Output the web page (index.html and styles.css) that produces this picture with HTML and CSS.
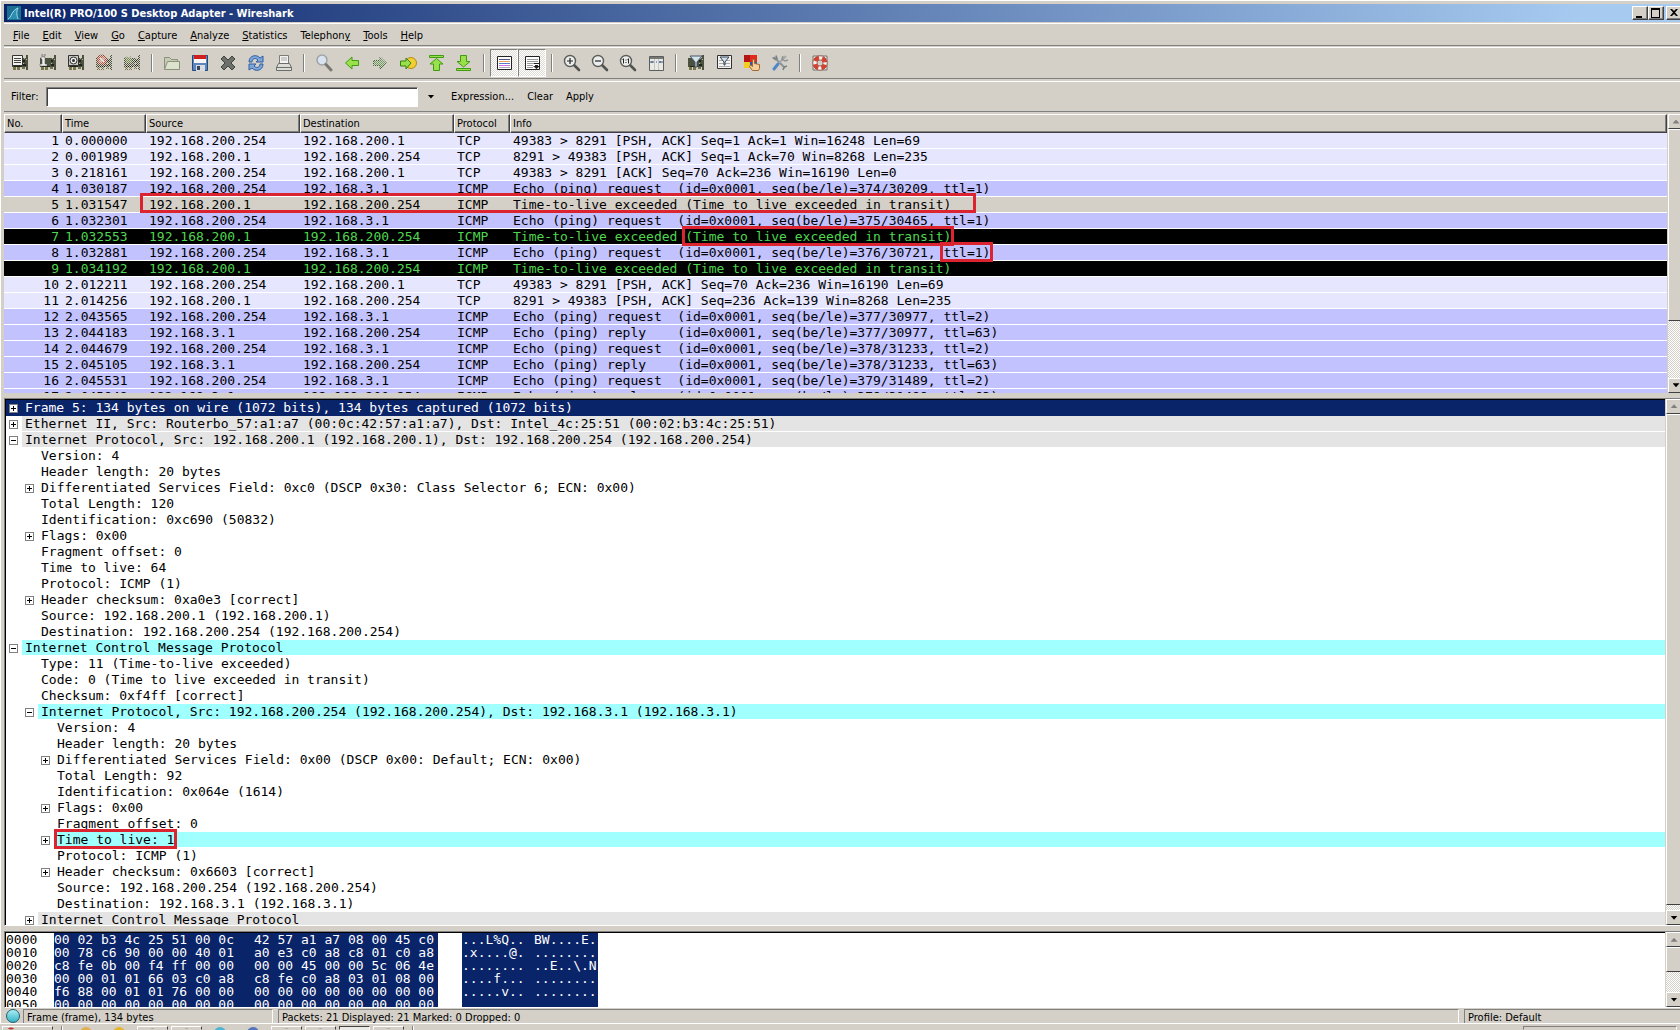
FILE: index.html
```html
<!DOCTYPE html>
<html lang="en">
<head>
<meta charset="utf-8">
<title>Intel(R) PRO/100 S Desktop Adapter - Wireshark</title>
<link rel="stylesheet" href="styles.css">
</head>
<body>
<svg class="defs" aria-hidden="true">
  <defs>
    <symbol id="card" viewBox="0 0 18 18">
      <path d="M15 1h2v15h-2zM1 4h14v9H1z" fill="#4c5240"/>
      <path d="M2 13h3v3H2zm4 0h3v3H6zm5 0h3v2h-3z" fill="#77754c"/>
      <path d="M12 6h2v2h-2zm0 4h3v2h-3zM3 12h8v1H3z" fill="#20241c"/>
      <path d="M13 4h1v1h-1zM12 9h1v1h-1zM15 5h1v1h-1z" fill="#b5b894"/>
    </symbol>
    <symbol id="lens" viewBox="0 0 18 18">
      <circle cx="7" cy="7" r="5.5" fill="#eceeed" stroke="#5a5d5a" stroke-width="1.4"/>
      <path d="M11.5 11.5l4.500 4.500" stroke="#50534f" stroke-width="2.6" stroke-linecap="round"/>
    </symbol>
    <pattern id="dots" width="2" height="2" patternUnits="userSpaceOnUse">
      <path d="M0 0h1v1H0zM1 1h1v1H1z" fill="#d4d0c8"/>
    </pattern>
  </defs>
</svg>
<div class="window">
  <header class="titlebar">
    <svg class="logo" viewBox="0 0 14 14"><path d="M0 0h14v14H0z" fill="#1d6f91"/><path d="M1 13C4 12 5 4 11 2c-2 4-1 8 0 11" fill="#2d8eaf" stroke="#9edcf0"/></svg>
    <h1>Intel(R) PRO/100 S Desktop Adapter - Wireshark</h1>
    <div class="winbtns">
      <button aria-label="Minimize"><svg viewBox="0 0 12 10"><path d="M2 8h6v2H2z"/></svg></button>
      <button aria-label="Maximize"><svg viewBox="0 0 12 10"><path d="M1 0h9v10H1zM2 2v7h7V2z" fill-rule="evenodd"/></svg></button>
      <button class="close" aria-label="Close"><svg viewBox="0 0 12 10"><path d="M2 1h2l2 2 2-2h2L7 4.500 10 8H8L6 6 4 8H2l3-3.500z"/></svg></button>
    </div>
  </header>
  <nav class="menubar">
    <button><u>F</u>ile</button><button><u>E</u>dit</button><button><u>V</u>iew</button><button><u>G</u>o</button><button><u>C</u>apture</button><button><u>A</u>nalyze</button><button><u>S</u>tatistics</button><button>Telephon<u>y</u></button><button><u>T</u>ools</button><button><u>H</u>elp</button>
  </nav>
  <div class="toolbar" role="toolbar">
    <button aria-label="List interfaces"><svg viewBox="0 0 18 18"><use href="#card"/><path d="M1.500 1.500h10v10h-10z" fill="#f2f2ee" stroke="#333"/><path d="M3 4.500h7M3 6.500h7M3 8.500h7" stroke="#444"/></svg></button>
    <button aria-label="Capture options"><svg viewBox="0 0 18 18"><use href="#card"/><path d="M2 3h4v7h2v2H1v-2h2V5H2z" fill="#eee" stroke="#555" stroke-width=".5"/><path d="M3 0h3v2H3z" fill="#eee" stroke="#333" stroke-width=".5"/></svg></button>
    <button aria-label="Start capture"><svg viewBox="0 0 18 18"><use href="#card"/><path d="M1.500 1.500h10v10h-10z" fill="#c9c9c2" stroke="#333"/><circle cx="6.500" cy="6.500" r="3.500" fill="#eee" stroke="#333"/><circle cx="6.500" cy="6.500" r="1.500" fill="#333"/></svg></button>
    <button aria-label="Stop capture" disabled><svg viewBox="0 0 18 18"><use href="#card"/><circle cx="7" cy="6" r="5" fill="#c4503e" stroke="#80382f"/><path d="M5 4l4 4m0-4L5 8" stroke="#eee" stroke-width="1.500"/><path d="M0 0h18v18H0z" fill="url(#dots)"/></svg></button>
    <button aria-label="Restart capture" disabled><svg viewBox="0 0 18 18"><use href="#card"/><path d="M2 2l4 2 2-2 1 7H3z" fill="#6f8a4a"/><path d="M0 0h18v18H0z" fill="url(#dots)"/></svg></button>
    <i class="sep"></i>
    <button aria-label="Open"><svg viewBox="0 0 18 18"><path d="M1.500 15.500v-12h5l2 2h6v3" fill="#c5cbb4" stroke="#8a927a"/><path d="M4.500 7.500h12v8h-15z" fill="#dde2cf" stroke="#8a927a"/></svg></button>
    <button aria-label="Save"><svg viewBox="0 0 18 18"><path d="M1.500 1.500h15v15h-15z" fill="#5c86bd" stroke="#27487a"/><path d="M3 1h12v4H3z" fill="#cf1f1f"/><path d="M3 5h12v4H3z" fill="#f6f6f6"/><path d="M5 11h9v6H5z" fill="#d8dce0"/><path d="M6 12h3v4H6z" fill="#35455e"/></svg></button>
    <button aria-label="Close file"><svg viewBox="0 0 18 18"><path d="M2 5l3-3 4 4 4-4 3 3-4 4 4 4-3 3-4-4-4 4-3-3 4-4z" fill="#6d6f6b" stroke="#41433f"/></svg></button>
    <button aria-label="Reload"><svg viewBox="0 0 18 18"><path d="M2 8C2 1 10 0 13 4l3-2v6h-7l2-2C8 3 5 5 5 8z" fill="#7da7dc" stroke="#315f9f"/><path d="M16 10c0 7-8 8-11 4l-3 2v-6h7l-2 2c3 3 6 1 6-2z" fill="#7da7dc" stroke="#315f9f"/></svg></button>
    <button aria-label="Print"><svg viewBox="0 0 18 18"><path d="M4.500 9.500v-8h9v8" fill="#f3f3f1" stroke="#7b7d79"/><path d="M6 4h6M6 6h6" stroke="#aaa"/><path d="M1.500 13.500l2-4h11l2 4v3h-15z" fill="#dcdcd8" stroke="#6b6d69"/><path d="M1.500 13.500h15" stroke="#6b6d69"/></svg></button>
    <i class="sep"></i>
    <button aria-label="Find"><svg viewBox="0 0 18 18"><circle cx="7" cy="6" r="5" fill="#d7e3ef" stroke="#a0a3a6" stroke-width="1.500"/><path d="M11 10.500l5 5.500" stroke="#7a7974" stroke-width="3" stroke-linecap="round"/></svg></button>
    <button aria-label="Back"><svg viewBox="0 0 18 18"><path d="M2.500 9L9 3v3.500h6.500v5H9V15z" fill="#9ae04a" stroke="#3f9a14"/></svg></button>
    <button aria-label="Forward" disabled><svg viewBox="0 0 18 18"><path d="M15.500 9L9 3v3.500H2.500v5H9V15z" fill="#6fa060" stroke="#3b5f38"/><path d="M0 0h18v18H0z" fill="url(#dots)"/></svg></button>
    <button aria-label="Go to packet"><svg viewBox="0 0 18 18"><circle cx="12" cy="9" r="5.500" fill="#f0cf33" stroke="#b28b12"/><path d="M12 9L7 4v3H1.500v5H7v3z" fill="#9ae04a" stroke="#35800f"/></svg></button>
    <button aria-label="First packet"><svg viewBox="0 0 18 18"><path d="M2.500 1.500h14v2h-14zM9.500 4.500L16 10h-3.500v6.500h-6V10H3z" fill="#9ae04a" stroke="#3f9a14"/></svg></button>
    <button aria-label="Last packet"><svg viewBox="0 0 18 18"><path d="M1.500 14.500h14v2h-14zM8.500 13L15 7.500h-3.500v-6h-6v6H2z" fill="#9ae04a" stroke="#3f9a14"/></svg></button>
    <i class="sep"></i>
    <button class="on" aria-pressed="true" aria-label="Colorize"><svg viewBox="0 0 18 18"><path d="M2.500 2.500h14v13h-14z" fill="#fff" stroke="#222"/><path d="M4 5.500h11" stroke="#557"/><path d="M4 7.500h11" stroke="#e8a25c"/><path d="M4 9.500h11" stroke="#5a79c9"/><path d="M4 11.500h11" stroke="#cf6fe0"/><path d="M4 13.500h11" stroke="#aab"/></svg></button>
    <button class="on" aria-pressed="true" aria-label="Auto scroll"><svg viewBox="0 0 18 18"><path d="M2.500 2.500h14v13h-14z" fill="#fff" stroke="#222"/><path d="M4 5.500h11M4 7.500h11M4 9.500h7M4 11.500h6M4 13.500h6" stroke="#999"/><path d="M11 9h5v1h-5zM12 11h3v1h2l-3.500 3L10 12h2z" fill="#222"/></svg></button>
    <i class="sep"></i>
    <button aria-label="Zoom in"><svg viewBox="0 0 18 18"><use href="#lens"/><path d="M4 7h6M7 4v6" stroke="#222" stroke-width="1.200"/></svg></button>
    <button aria-label="Zoom out"><svg viewBox="0 0 18 18"><use href="#lens"/><path d="M4 7h6" stroke="#222" stroke-width="1.200"/></svg></button>
    <button aria-label="Normal size"><svg viewBox="0 0 18 18"><use href="#lens"/><path d="M4.500 4.500v5M9.500 4.500v5M7 5.500v1M7 8v1M3.500 5.500h1M8.500 5.500h1" stroke="#222"/></svg></button>
    <button aria-label="Resize columns"><svg viewBox="0 0 18 18"><path d="M2.500 2.500h14v14h-14z" fill="#e9e9e6" stroke="#5b5d59"/><path d="M3 3h13v2H3z" fill="#777"/><path d="M7.500 5v11M11.500 5v11" stroke="#c4c4c0"/><path d="M3 8h4M12 8h4M9 8h1M5 7v2M13 7v2" stroke="#3b5b8d"/></svg></button>
    <i class="sep"></i>
    <button aria-label="Capture filters"><svg viewBox="0 0 18 18"><use href="#card"/><path d="M3 2h12l-5 6v5H8V8z" fill="#d5e3ea" stroke="#456"/></svg></button>
    <button aria-label="Display filters"><svg viewBox="0 0 18 18"><path d="M2.500 1.500h14v13h-14z" fill="#f2f2f0" stroke="#333"/><path d="M4 9.500h11M4 12.500h11M4 6.500h11" stroke="#aaa"/><path d="M5 3h9l-4 5v3H9V8z" fill="#cfe0e8" stroke="#345"/></svg></button>
    <button aria-label="Coloring rules"><svg viewBox="0 0 18 18"><path d="M1 1h6v7H1z" fill="#b51414"/><path d="M7 1h7v7H7z" fill="#e12a1c"/><path d="M1 8h6v6H1z" fill="#f4cd1f"/><path d="M7 8h7v6H7z" fill="#2e55b7"/><path d="M9.500 16.500l-3-4 1-1.500 2 1.500v-7h2v4l5 1v4l-1 2z" fill="#f4cf9b" stroke="#a3682d"/></svg></button>
    <button aria-label="Preferences"><svg viewBox="0 0 18 18"><path d="M3 3l11 11" stroke="#8d9294" stroke-width="2"/><path d="M1.500 3.500l3 2 1.500-1L5 1.500M12 16l1-3 3-1" fill="none" stroke="#7a8286" stroke-width="1.500"/><path d="M15 2L8 9" stroke="#a5a9ab" stroke-width="2"/><path d="M7 10l-4 5" stroke="#4f86c9" stroke-width="3" stroke-linecap="round"/><path d="M12 2l-1 3 3 2 3-1" fill="none" stroke="#8d9294" stroke-width="1.500"/></svg></button>
    <i class="sep"></i>
    <button aria-label="Help"><svg viewBox="0 0 18 18"><path d="M2 2h14v14H2z" fill="#e6e3dd" stroke="#77756f"/><circle cx="9" cy="9" r="5.200" fill="none" stroke="#f4f1ee" stroke-width="4"/><circle cx="9" cy="9" r="5.200" fill="none" stroke="#d9412f" stroke-width="4" stroke-dasharray="4.900 3.268" stroke-dashoffset="-1.600"/><circle cx="9" cy="9" r="7.200" fill="none" stroke="#8b3a30" stroke-width=".6"/><circle cx="9" cy="9" r="3" fill="#d4d0c8" stroke="#8b3a30" stroke-width=".7"/></svg></button>
  </div>
  <form class="filter">
    <label for="filter">Filter:</label>
    <input id="filter" type="text">
    <button type="button" class="drop" aria-label="Filter history"><i class="tri down"></i></button>
    <button type="button" class="expr">Expression...</button>
    <button type="button" class="clear">Clear</button>
    <button type="button">Apply</button>
  </form>

  <section class="pane list">
    <div class="view">
      <table>
        <colgroup><col class="c-no"><col class="c-time"><col class="c-addr"><col class="c-addr"><col class="c-proto"><col></colgroup>
        <thead><tr><th>No.</th><th>Time</th><th>Source</th><th>Destination</th><th>Protocol</th><th>Info</th></tr></thead>
        <tbody>
          <tr class="tcp"><td>1</td><td>0.000000</td><td>192.168.200.254</td><td>192.168.200.1</td><td>TCP</td><td>49383 &gt; 8291 [PSH, ACK] Seq=1 Ack=1 Win=16248 Len=69</td></tr>
          <tr class="tcp"><td>2</td><td>0.001989</td><td>192.168.200.1</td><td>192.168.200.254</td><td>TCP</td><td>8291 &gt; 49383 [PSH, ACK] Seq=1 Ack=70 Win=8268 Len=235</td></tr>
          <tr class="tcp"><td>3</td><td>0.218161</td><td>192.168.200.254</td><td>192.168.200.1</td><td>TCP</td><td>49383 &gt; 8291 [ACK] Seq=70 Ack=236 Win=16190 Len=0</td></tr>
          <tr class="icmp"><td>4</td><td>1.030187</td><td>192.168.200.254</td><td>192.168.3.1</td><td>ICMP</td><td>Echo (ping) request  (id=0x0001, seq(be/le)=374/30209, ttl=1)</td></tr>
          <tr class="sel"><td>5</td><td>1.031547</td><td class="boxed">192.168.200.1</td><td>192.168.200.254</td><td>ICMP</td><td>Time-to-live exceeded (Time to live exceeded in transit)</td></tr>
          <tr class="icmp"><td>6</td><td>1.032301</td><td>192.168.200.254</td><td>192.168.3.1</td><td>ICMP</td><td>Echo (ping) request  (id=0x0001, seq(be/le)=375/30465, ttl=1)</td></tr>
          <tr class="err"><td>7</td><td>1.032553</td><td>192.168.200.1</td><td>192.168.200.254</td><td>ICMP</td><td>Time-to-live exceeded <span class="mark">(Time to live exceeded in transit)</span></td></tr>
          <tr class="icmp"><td>8</td><td>1.032881</td><td>192.168.200.254</td><td>192.168.3.1</td><td>ICMP</td><td>Echo (ping) request  (id=0x0001, seq(be/le)=376/30721, <span class="mark">ttl=1)</span></td></tr>
          <tr class="err"><td>9</td><td>1.034192</td><td>192.168.200.1</td><td>192.168.200.254</td><td>ICMP</td><td>Time-to-live exceeded (Time to live exceeded in transit)</td></tr>
          <tr class="tcp"><td>10</td><td>2.012211</td><td>192.168.200.254</td><td>192.168.200.1</td><td>TCP</td><td>49383 &gt; 8291 [PSH, ACK] Seq=70 Ack=236 Win=16190 Len=69</td></tr>
          <tr class="tcp"><td>11</td><td>2.014256</td><td>192.168.200.1</td><td>192.168.200.254</td><td>TCP</td><td>8291 &gt; 49383 [PSH, ACK] Seq=236 Ack=139 Win=8268 Len=235</td></tr>
          <tr class="icmp"><td>12</td><td>2.043565</td><td>192.168.200.254</td><td>192.168.3.1</td><td>ICMP</td><td>Echo (ping) request  (id=0x0001, seq(be/le)=377/30977, ttl=2)</td></tr>
          <tr class="icmp"><td>13</td><td>2.044183</td><td>192.168.3.1</td><td>192.168.200.254</td><td>ICMP</td><td>Echo (ping) reply    (id=0x0001, seq(be/le)=377/30977, ttl=63)</td></tr>
          <tr class="icmp"><td>14</td><td>2.044679</td><td>192.168.200.254</td><td>192.168.3.1</td><td>ICMP</td><td>Echo (ping) request  (id=0x0001, seq(be/le)=378/31233, ttl=2)</td></tr>
          <tr class="icmp"><td>15</td><td>2.045105</td><td>192.168.3.1</td><td>192.168.200.254</td><td>ICMP</td><td>Echo (ping) reply    (id=0x0001, seq(be/le)=378/31233, ttl=63)</td></tr>
          <tr class="icmp"><td>16</td><td>2.045531</td><td>192.168.200.254</td><td>192.168.3.1</td><td>ICMP</td><td>Echo (ping) request  (id=0x0001, seq(be/le)=379/31489, ttl=2)</td></tr>
          <tr class="icmp"><td>17</td><td>2.045949</td><td>192.168.3.1</td><td>192.168.200.254</td><td>ICMP</td><td>Echo (ping) reply    (id=0x0001, seq(be/le)=379/31489, ttl=63)</td></tr>
        </tbody>
      </table>
    </div>
    <div class="scroll"><button aria-label="Up"><i class="tri up"></i></button><div class="thumb"></div><div class="track"></div><button aria-label="Down"><i class="tri down"></i></button></div>
  </section>

  <section class="pane tree sunken">
    <div class="view">
      <div class="row sel"><button aria-label="Expand"></button><span>Frame 5: 134 bytes on wire (1072 bits), 134 bytes captured (1072 bits)</span></div>
      <div class="row head"><button aria-label="Expand"></button><span>Ethernet II, Src: Routerbo_57:a1:a7 (00:0c:42:57:a1:a7), Dst: Intel_4c:25:51 (00:02:b3:4c:25:51)</span></div>
      <div class="row head"><button aria-label="Collapse"></button><span>Internet Protocol, Src: 192.168.200.1 (192.168.200.1), Dst: 192.168.200.254 (192.168.200.254)</span></div>
      <div class="group">
        <div class="row"><span>Version: 4</span></div>
        <div class="row"><span>Header length: 20 bytes</span></div>
        <div class="row"><button aria-label="Expand"></button><span>Differentiated Services Field: 0xc0 (DSCP 0x30: Class Selector 6; ECN: 0x00)</span></div>
        <div class="row"><span>Total Length: 120</span></div>
        <div class="row"><span>Identification: 0xc690 (50832)</span></div>
        <div class="row"><button aria-label="Expand"></button><span>Flags: 0x00</span></div>
        <div class="row"><span>Fragment offset: 0</span></div>
        <div class="row"><span>Time to live: 64</span></div>
        <div class="row"><span>Protocol: ICMP (1)</span></div>
        <div class="row"><button aria-label="Expand"></button><span>Header checksum: 0xa0e3 [correct]</span></div>
        <div class="row"><span>Source: 192.168.200.1 (192.168.200.1)</span></div>
        <div class="row"><span>Destination: 192.168.200.254 (192.168.200.254)</span></div>
      </div>
      <div class="row hit"><button aria-label="Collapse"></button><span>Internet Control Message Protocol</span></div>
      <div class="group">
        <div class="row"><span>Type: 11 (Time-to-live exceeded)</span></div>
        <div class="row"><span>Code: 0 (Time to live exceeded in transit)</span></div>
        <div class="row"><span>Checksum: 0xf4ff [correct]</span></div>
        <div class="row hit"><button aria-label="Collapse"></button><span>Internet Protocol, Src: 192.168.200.254 (192.168.200.254), Dst: 192.168.3.1 (192.168.3.1)</span></div>
        <div class="group">
          <div class="row"><span>Version: 4</span></div>
          <div class="row"><span>Header length: 20 bytes</span></div>
          <div class="row"><button aria-label="Expand"></button><span>Differentiated Services Field: 0x00 (DSCP 0x00: Default; ECN: 0x00)</span></div>
          <div class="row"><span>Total Length: 92</span></div>
          <div class="row"><span>Identification: 0x064e (1614)</span></div>
          <div class="row"><button aria-label="Expand"></button><span>Flags: 0x00</span></div>
          <div class="row"><span>Fragment offset: 0</span></div>
          <div class="row hit"><button aria-label="Expand"></button><span><b class="mark">Time to live: 1</b></span></div>
          <div class="row"><span>Protocol: ICMP (1)</span></div>
          <div class="row"><button aria-label="Expand"></button><span>Header checksum: 0x6603 [correct]</span></div>
          <div class="row"><span>Source: 192.168.200.254 (192.168.200.254)</span></div>
          <div class="row"><span>Destination: 192.168.3.1 (192.168.3.1)</span></div>
        </div>
        <div class="row head"><button aria-label="Expand"></button><span>Internet Control Message Protocol</span></div>
      </div>
    </div>
    <div class="scroll"><button aria-label="Up"><i class="tri up"></i></button><div class="thumb"></div><div class="track"></div><button aria-label="Down"><i class="tri down"></i></button></div>
  </section>

  <section class="pane hex sunken">
    <div class="view">
      <div class="line"><span>0000</span><span>00 02 b3 4c 25 51 00 0c</span><span>42 57 a1 a7 08 00 45 c0</span><span>...L%Q..</span><span>BW....E.</span></div>
      <div class="line"><span>0010</span><span>00 78 c6 90 00 00 40 01</span><span>a0 e3 c0 a8 c8 01 c0 a8</span><span>.x....@.</span><span>........</span></div>
      <div class="line"><span>0020</span><span>c8 fe 0b 00 f4 ff 00 00</span><span>00 00 45 00 00 5c 06 4e</span><span>........</span><span>..E..\.N</span></div>
      <div class="line"><span>0030</span><span>00 00 01 01 66 03 c0 a8</span><span>c8 fe c0 a8 03 01 08 00</span><span>....f...</span><span>........</span></div>
      <div class="line"><span>0040</span><span>f6 88 00 01 01 76 00 00</span><span>00 00 00 00 00 00 00 00</span><span>.....v..</span><span>........</span></div>
      <div class="line"><span>0050</span><span>00 00 00 00 00 00 00 00</span><span>00 00 00 00 00 00 00 00</span><span>........</span><span>........</span></div>
    </div>
    <div class="scroll"><button aria-label="Up"><i class="tri up"></i></button><div class="thumb"></div><div class="track"></div><button aria-label="Down"><i class="tri down"></i></button></div>
  </section>

  <footer class="status">
    <i class="orb"></i>
    <span class="s-frame">Frame (frame), 134 bytes</span>
    <span class="s-packets">Packets: 21 Displayed: 21 Marked: 0 Dropped: 0</span>
    <span class="s-profile">Profile: Default</span>
  </footer>
</div>
<div class="taskbar">
  <i class="task start"></i><i class="tsep"></i><i class="dot gold"></i><i class="dot amber"></i>
  <i class="task"></i><i class="task"></i><i class="dot cyan"></i><i class="dot blue"></i>
  <i class="task"></i><i class="task"></i><i class="task down"></i><i class="task"></i><i class="tsep"></i>
  <i class="tray"></i>
</div>
</body>
</html>
```
FILE: styles.css
```css
*, *::after { box-sizing: border-box; }

:root {
  --face: #d4d0c8;
  --shade: #808080;
  --navy: #0a246a;
  --red: #dc2430;
  --ui: 11px "DejaVu Sans Condensed", "DejaVu Sans", sans-serif;
  --mono: 13px "DejaVu Sans Mono", monospace;
}

body {
  margin: 0;
  height: 100vh;
  overflow: hidden;
  display: flex;
  flex-direction: column;
  background: var(--face);
  font: var(--ui);
  color: #000;
}

button {
  margin: 0;
  padding: 0;
  border: 0;
  background: none;
  font: inherit;
  color: inherit;
}

.defs { position: absolute; width: 0; height: 0; }

/* The frame runs a little past the right edge of the screen. */
.window {
  flex: 1;
  min-height: 0;
  margin-right: -4px;
  padding: 3px 0 0 4px;
  border-top: 1px solid #fff;
  box-shadow: inset 1px 0 #fff;
  display: flex;
  flex-direction: column;
}

/* Title bar */
.titlebar {
  flex: none;
  height: 18px;
  padding: 0 2px 0 3px;
  display: flex;
  align-items: center;
  gap: 3px;
  background: linear-gradient(90deg, #0a246a, #a6caf0 94%);
}
.logo { width: 14px; height: 14px; }
h1 {
  flex: 1;
  margin: 0;
  font: bold 11px "DejaVu Sans Condensed", sans-serif;
  color: #fff;
}
.winbtns { display: flex; }
.winbtns button {
  width: 16px;
  height: 14px;
  padding: 0 1px;
  background: var(--face);
  border: 1px solid;
  border-color: #fff #404040 #404040 #fff;
  box-shadow: inset -1px -1px var(--shade);
}
.winbtns .close { margin-left: 2px; }
.winbtns svg { display: block; width: 12px; height: 10px; }

/* Menus and tools */
.menubar, .toolbar, .filter {
  flex: none;
  display: flex;
  align-items: center;
  border-top: 1px solid #fff;
  border-bottom: 1px solid var(--shade);
}
.menubar { height: 23px; margin-top: 1px; padding: 2px 0 0 2px; }
.menubar button { padding: 0 6px 0 7px; }
.toolbar { height: 32px; margin-top: 1px; padding-left: 2px; }
.toolbar button { width: 28px; height: 28px; }
.toolbar svg { display: block; width: 18px; height: 18px; margin: 0 auto; }
.toolbar .on {
  border: 1px solid;
  border-color: var(--shade) #fff #fff var(--shade);
  background: repeating-conic-gradient(#fff 0 25%, #dedbd5 0 50%) 0 0 / 2px 2px;
}
.sep {
  width: 2px;
  height: 18px;
  margin: 0 5px;
  border-left: 1px solid var(--shade);
  border-right: 1px solid #fff;
}
.filter { height: 31px; margin-top: 2px; padding-left: 7px; }
.filter label { width: 35px; }
.filter input {
  width: 372px;
  height: 20px;
  padding: 0 4px;
  border: 1px solid;
  border-color: var(--shade) #fff #fff var(--shade);
  box-shadow: inset 1px 1px #404040;
  outline: 0;
  background: #fff;
  font: inherit;
}
.drop { width: 26px; margin-right: 7px; }
.expr { margin-right: 13px; }
.clear { margin-right: 13px; }
.tri {
  display: block;
  width: 7px;
  height: 4px;
  margin: 0 auto;
}
.tri.down { background: #000; clip-path: polygon(0 0, 100% 0, 50% 100%); }
.tri.up { background: var(--shade); clip-path: polygon(0 100%, 100% 100%, 50% 0); }

/* Panes */
.pane {
  min-height: 0;
  display: flex;
  font: var(--mono);
}
.view { flex: 1; min-width: 0; overflow: hidden; background: #fff; }
.list { flex: 280 1 0; margin-top: 2px; }
.tree { flex: 529 1 0; margin-top: 5px; }
.hex { flex: 75 1 0; margin-top: 5px; }
.sunken {
  border: 1px solid;
  border-color: var(--shade) #fff #fff var(--shade);
  border-right-width: 2px;
}
.sunken .view { box-shadow: inset 1px 1px #000; padding: 1px 0 0 1px; margin-right: 1px; }

.list .view { margin-right: 1px; }
table { width: 100%; table-layout: fixed; border-spacing: 0; }
.c-no { width: 58px; }
.c-time { width: 84px; }
.c-addr { width: 154px; }
.c-proto { width: 56px; }
th {
  height: 19px;
  padding: 0 2px;
  text-align: left;
  font: var(--ui);
  background: var(--face);
  border: 1px solid;
  border-color: #fff #404040 #404040 #fff;
  box-shadow: inset -1px -1px var(--shade);
}
td {
  height: 16px;
  padding: 0 3px;
  line-height: 15px;
  white-space: pre;
  border-bottom: 1px solid #fff;
}
td:first-child { text-align: right; }
.tcp { background: #e6e6ff; }
.icmp { background: #c2c2ff; }
.list .sel { background: var(--face); }
.err { background: #000; color: #4fd64f; }

/* Red callouts */
.mark, .boxed { position: relative; font-weight: normal; }
.mark::after, .boxed::after {
  content: "";
  position: absolute;
  inset: -3px -3px -2px;
  border: 3px solid var(--red);
}
.boxed::after { inset: -4px auto -1px -6px; width: 836px; }

/* Packet details */
.row {
  height: 16px;
  padding-left: 16px;
  line-height: 15px;
  display: flex;
}
.row span {
  flex: 1;
  padding-left: 3px;
  white-space: pre;
  border-bottom: 1px solid #fff;
}
.row button {
  width: 9px;
  height: 9px;
  margin: 4px 4px 0 -13px;
  border: 1px solid var(--shade);
  background:
    linear-gradient(#000, #000) center / 5px 1px no-repeat,
    linear-gradient(#000, #000) center / 1px 5px no-repeat,
    #fff;
}
.row button[aria-label="Collapse"] {
  background: linear-gradient(#000, #000) center / 5px 1px no-repeat, #fff;
}
.group { padding-left: 16px; }
.head span { background: #e4e4e4; }
.hit span { background: #a0ffff; }
.tree .sel { background: var(--navy); color: #fff; }
.tree .sel span { border-color: var(--navy); }

/* Packet bytes */
.line {
  display: grid;
  grid-template-columns: 48px 200px 184px 24px 72px 64px;
  height: 13px;
  line-height: 13px;
}
.line span { white-space: pre; }
.line span:not(:first-child) { background: var(--navy); color: #fff; }
.line span:nth-child(4) { grid-column: 5; }

/* Scroll bars */
.scroll {
  flex: none;
  width: 16px;
  display: flex;
  flex-direction: column;
  background: repeating-conic-gradient(#fff 0 25%, var(--face) 0 50%) 0 0 / 2px 2px;
}
.scroll button, .thumb {
  flex: none;
  height: 15px;
  background: var(--face);
  border: 1px solid;
  border-color: #fff #404040 #404040 #fff;
}
.scroll .thumb { flex: 192 1 0; }
.track { flex: 57 1 0; }
.tree .thumb { flex: 484 1 0; }
.tree .track { flex: 5 1 0; }
.hex .thumb { flex: 20 1 0; }
.hex .track { flex: 18 1 0; }

/* Status bar and task bar */
.status {
  flex: none;
  height: 15px;
  padding: 1px 0 0 2px;
  display: flex;
  overflow: hidden;
  line-height: 16px;
}
.status span {
  padding-left: 3px;
  border: 1px solid;
  border-color: var(--shade) #fff transparent var(--shade);
  border-bottom: 0;
}
.orb {
  width: 14px;
  height: 14px;
  margin-right: 3px;
  border: 1px solid #245d68;
  border-radius: 50%;
  background: linear-gradient(#a8eef5, #36b3c4);
}
.s-frame { width: 250px; margin-right: 5px; }
.s-packets { flex: 1; margin-right: 5px; }
.s-profile { width: 220px; }

.taskbar {
  flex: none;
  height: 7px;
  padding: 2px 3px 0 2px;
  border-top: 1px solid #fff;
  display: flex;
  gap: 3px;
  overflow: hidden;
}
.task {
  width: 31px;
  border: 1px solid;
  border-color: #fff #404040 transparent #fff;
  background: radial-gradient(circle at 50% 6px, #8a8a8a 4px, transparent 5px);
}
.task.start { width: 51px; background: radial-gradient(circle at 8px 5px, #c23a2c 4px, transparent 5px); }
.task.down { border-color: #404040 #fff transparent #404040; background: #eceae5; }
.tsep { width: 2px; margin: 0 5px; border-left: 1px solid var(--shade); border-right: 1px solid #fff; }
.dot { width: 12px; height: 6px; margin: 1px 9px 0; border-radius: 6px 6px 0 0; }
.gold { background: #e0b050; }
.amber { background: #e3b62c; }
.cyan { background: #4fb3d4; }
.blue { background: #5573b8; }
.tray {
  width: 154px;
  margin-left: auto;
  border: 1px solid;
  border-color: var(--shade) #fff transparent var(--shade);
}
```
